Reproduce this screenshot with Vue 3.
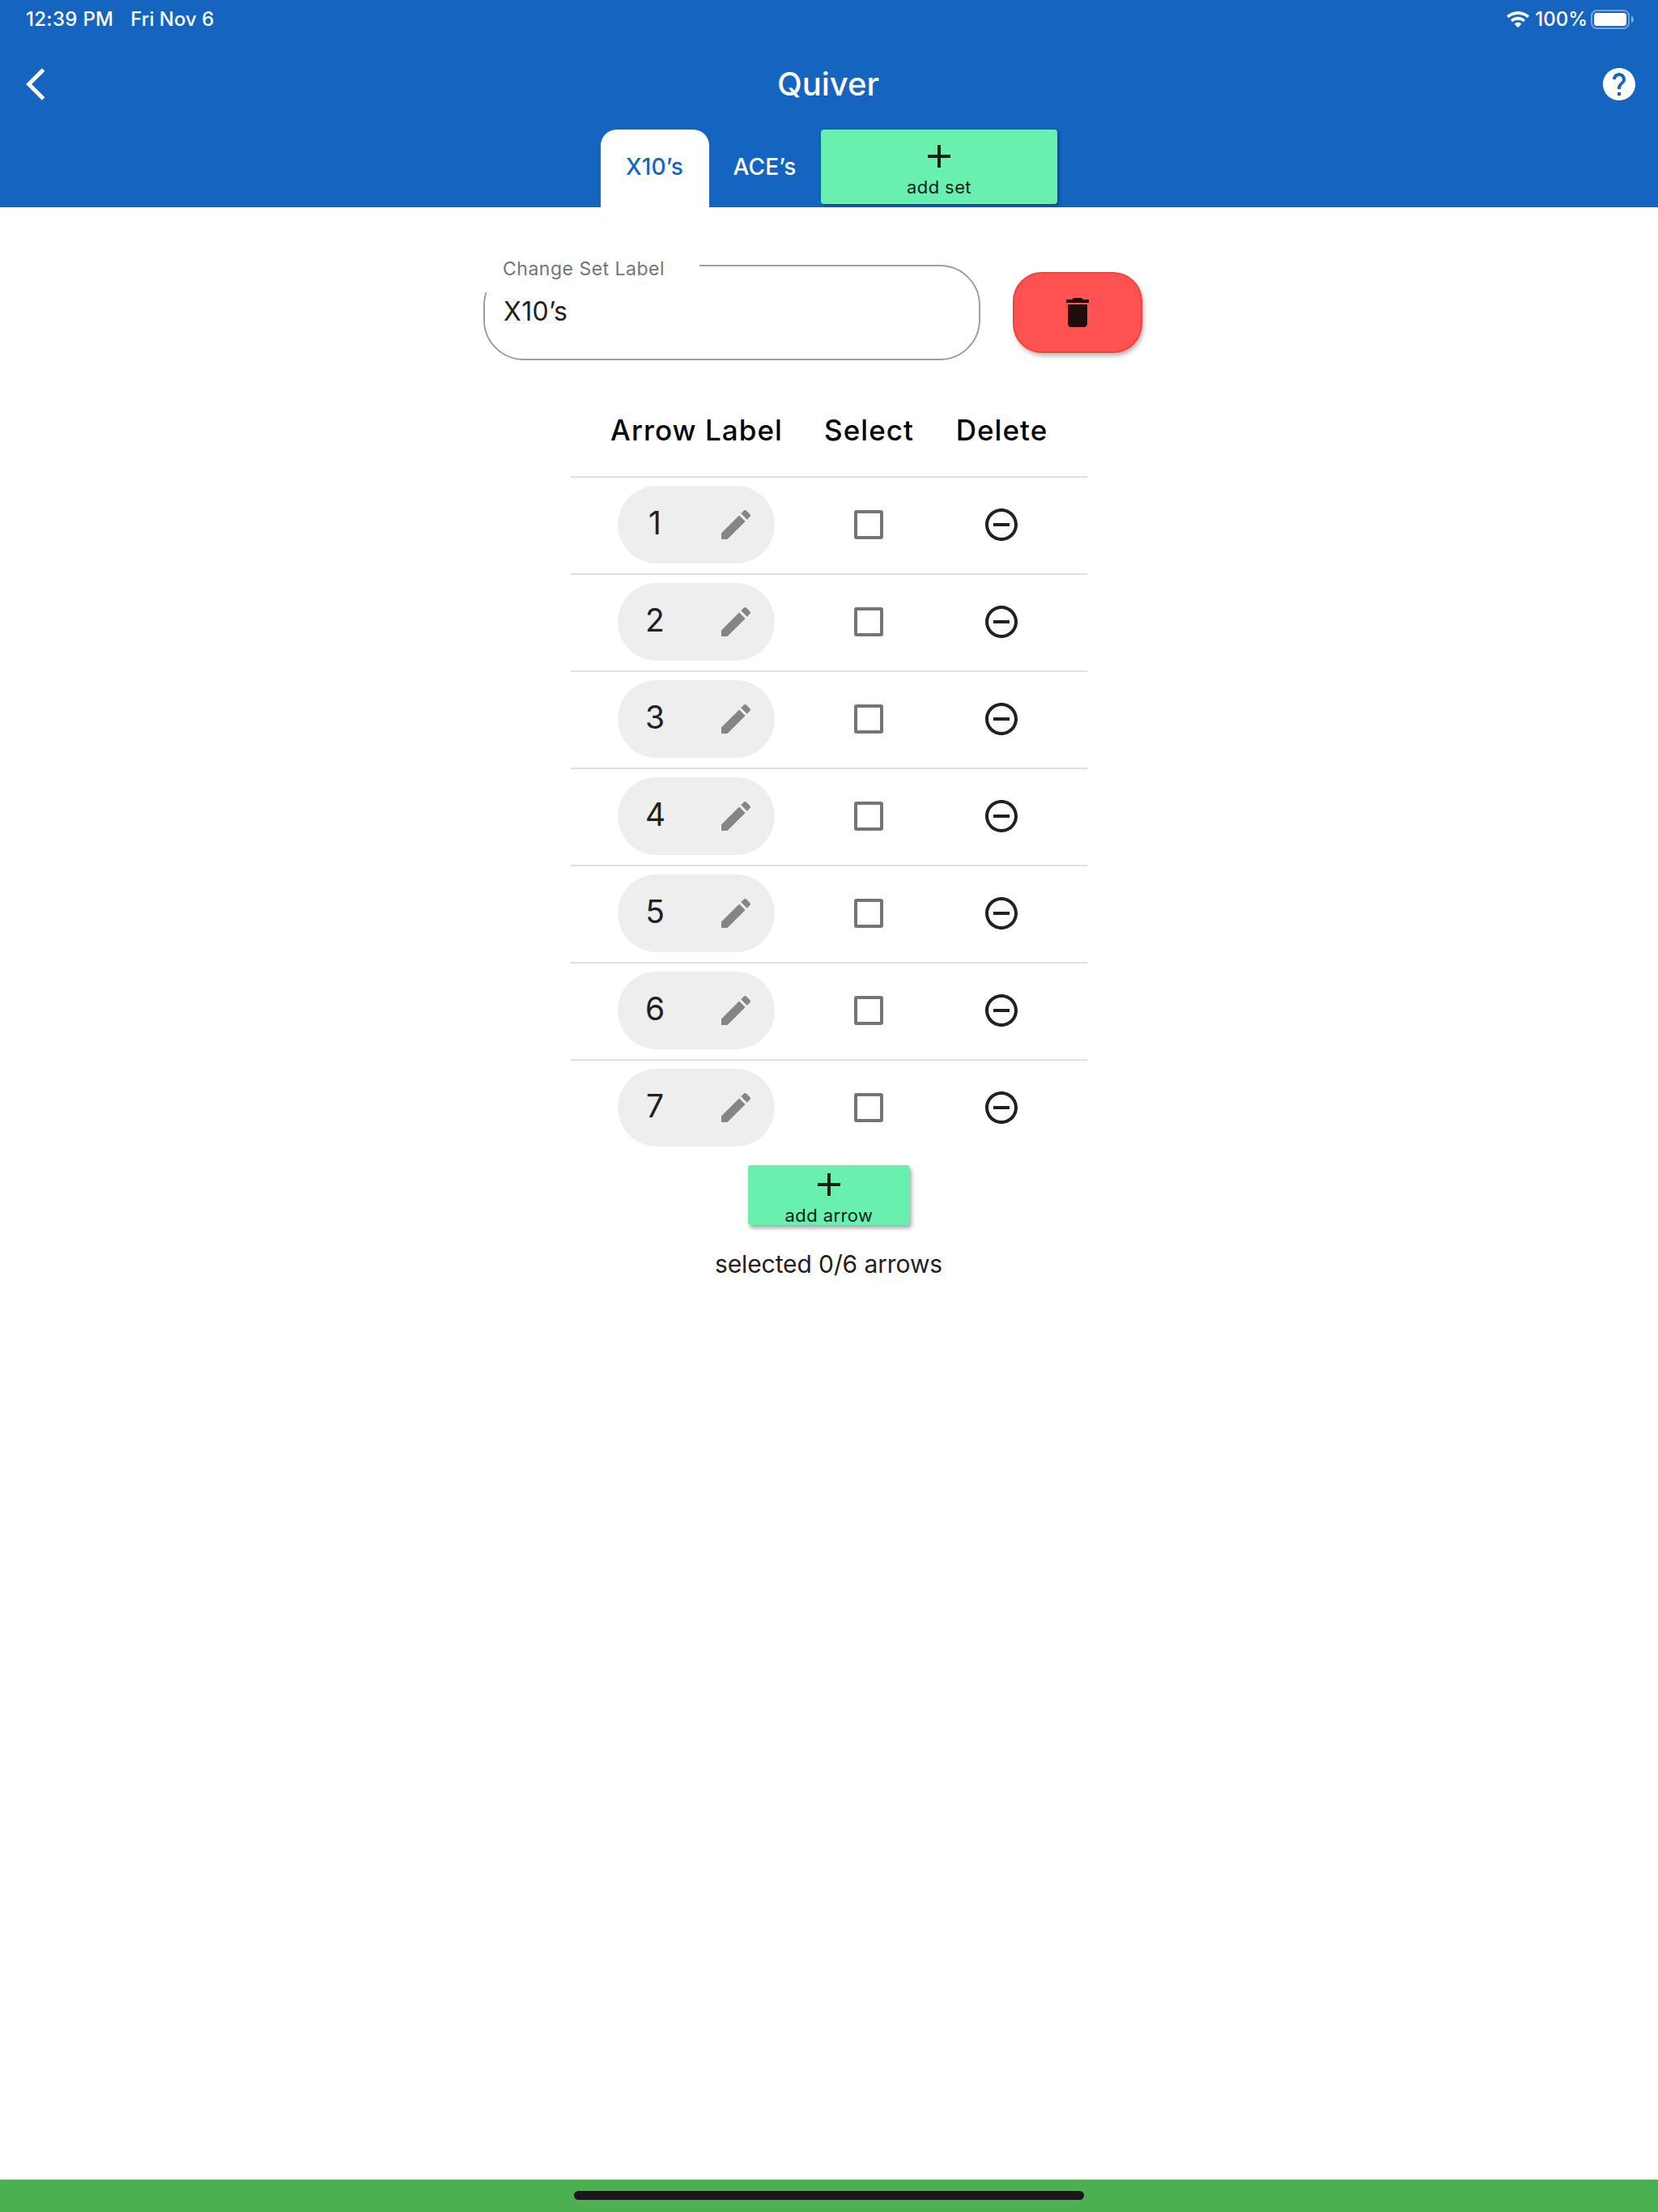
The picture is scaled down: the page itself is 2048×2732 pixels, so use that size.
<script setup>
import { ref } from 'vue'

const setLabel = ref('X10’s')
const arrows = ref(['1', '2', '3', '4', '5', '6', '7'])
</script>

<template>
  <div class="screen">
    <header class="app-bar">
      <div class="status">
        <span class="time">12:39 PM</span>
        <span class="date">Fri Nov 6</span>
        <svg class="wifi" width="28" height="21" viewBox="0 0 28 21">
          <path d="M14 0C8.700 0 3.700 2.100 0 5.600L2.500 8.200C5.500 5.300 9.600 4 14 4S22.500 5.300 25.500 8.200L28 5.600C24.300 2.100 19.300 0 14 0Z" />
          <path d="M14 6.800C10.500 6.800 7.300 8.200 4.900 10.600L7.400 13.200C9.200 11.500 11.500 10.800 14 10.800S18.800 11.500 20.600 13.200L23.100 10.600C20.700 8.200 17.500 6.800 14 6.800Z" />
          <path d="M14 13.600C12.300 13.600 10.900 14.300 9.700 15.600L14 20.200L18.300 15.600C17.100 14.300 15.700 13.600 14 13.600Z" />
        </svg>
        <span class="percent">100%</span>
        <svg class="battery" width="54" height="24" viewBox="0 0 54 24">
          <rect x="1" y="1" width="46" height="22" rx="6.500" fill="none" stroke="#fff" stroke-opacity=".42" stroke-width="2" />
          <rect x="4" y="4" width="40" height="16" rx="3.500" />
          <path d="M50 7.500C51.800 8.300 53 10 53 12S51.800 15.700 50 16.500Z" fill-opacity=".45" />
        </svg>
      </div>
      <div class="toolbar">
        <svg class="icon" viewBox="0 0 24 24"><path d="M11.670 3.870L9.900 2.100 0 12l9.900 9.900 1.770-1.770L3.540 12z" /></svg>
        <h1>Quiver</h1>
        <svg class="icon" viewBox="0 0 24 24"><path d="M12 2C6.480 2 2 6.480 2 12s4.480 10 10 10 10-4.480 10-10S17.520 2 12 2zm1 17h-2v-2h2v2zm2.070-7.750l-.9.920C13.450 12.900 13 13.500 13 15h-2v-.5c0-1.100.45-2.100 1.170-2.830l1.240-1.260c.37-.36.590-.86.590-1.410 0-1.100-.9-2-2-2s-2 .9-2 2H8c0-2.210 1.790-4 4-4s4 1.790 4 4c0 .88-.36 1.680-.93 2.250z" /></svg>
      </div>
      <nav class="tabs">
        <div class="tab active">X10’s</div>
        <div class="tab">ACE’s</div>
        <button class="add add-set">
          <svg class="icon" viewBox="0 0 24 24"><path d="M19 13h-6v6h-2v-6H5v-2h6V5h2v6h6v2z" /></svg>
          <span>add set</span>
        </button>
      </nav>
    </header>

    <main>
      <div class="set-row">
        <div class="field">
          <label>Change Set Label</label>
          <span>{{ setLabel }}</span>
        </div>
        <button class="remove-set">
          <svg class="icon" viewBox="0 0 24 24"><path d="M6 19c0 1.100.9 2 2 2h8c1.100 0 2-.9 2-2V7H6v12zM19 4h-3.500l-1-1h-5l-1 1H5v2h14V4z" /></svg>
        </button>
      </div>

      <div class="table">
        <div class="row head">
          <span>Arrow Label</span>
          <span>Select</span>
          <span>Delete</span>
        </div>
        <div v-for="arrow in arrows" :key="arrow" class="row">
          <div class="chip">
            <span>{{ arrow }}</span>
            <svg class="icon" viewBox="0 0 24 24"><path d="M3 17.250V21h3.750L17.810 9.940l-3.750-3.750L3 17.250zM20.710 7.040c.39-.39.390-1.020 0-1.410l-2.340-2.340c-.39-.39-1.020-.39-1.410 0l-1.830 1.830 3.750 3.750 1.830-1.830z" /></svg>
          </div>
          <span class="checkbox"></span>
          <svg class="icon" viewBox="0 0 24 24"><path d="M7 11v2h10v-2H7zm5-9C6.480 2 2 6.480 2 12s4.480 10 10 10 10-4.480 10-10S17.520 2 12 2zm0 18c-4.410 0-8-3.590-8-8s3.590-8 8-8 8 3.590 8 8-3.590 8-8 8z" /></svg>
        </div>
      </div>

      <button class="add add-arrow">
        <svg class="icon" viewBox="0 0 24 24"><path d="M19 13h-6v6h-2v-6H5v-2h6V5h2v6h6v2z" /></svg>
        <span>add arrow</span>
      </button>
      <p class="summary">selected 0/6 arrows</p>
    </main>

    <footer><div class="home-bar"></div></footer>
  </div>
</template>

<style>
body {
  margin: 0;
  background: #fff;
}
</style>

<style scoped>
.screen {
  display: flex;
  flex-direction: column;
  width: 2048px;
  height: 2732px;
  overflow: hidden;
  background: #fff;
  color: #212121;
  font-family: Inter, "Liberation Sans", sans-serif;
}

.icon {
  display: block;
  flex: none;
  width: 48px;
  height: 48px;
  fill: currentColor;
}

button {
  box-sizing: border-box;
  margin: 0;
  padding: 0;
  border: 0;
  font-family: inherit;
}

.app-bar {
  display: flex;
  flex-direction: column;
  flex: none;
  height: 256px;
  background: #1565c0;
  color: #fff;
}

.status {
  display: flex;
  align-items: center;
  height: 48px;
  padding: 0 29px 0 32px;
  font-size: 24px;
  font-weight: 500;
  line-height: 48px;
  white-space: nowrap;
}

.time {
  letter-spacing: .3px;
}

.date {
  margin-left: 21px;
}

.status svg {
  fill: #fff;
}

.wifi {
  margin-left: auto;
}

.percent {
  margin: 0 4px 0 7px;
}

.toolbar {
  display: flex;
  align-items: center;
  justify-content: space-between;
  height: 112px;
  padding: 0 24px 0 32px;
}

.toolbar h1 {
  margin: 0 0 0 -10px;
  font-size: 40px;
  font-weight: 500;
  line-height: 48px;
}

.tabs {
  display: flex;
  align-items: flex-start;
  justify-content: center;
  height: 96px;
}

.tab {
  box-sizing: border-box;
  width: 134px;
  height: 96px;
  padding-right: 1px;
  border-radius: 20px 20px 0 0;
  font-size: 28px;
  font-weight: 500;
  line-height: 93px;
  letter-spacing: .2px;
  text-align: center;
}

.tab + .tab {
  width: 138px;
}

.active {
  background: #fff;
  color: #1565c0;
}

.add {
  display: flex;
  flex-direction: column;
  align-items: center;
  border-radius: 4px;
  background: #69f0ae;
  color: #0f2419;
  font-size: 22px;
  line-height: 28px;
  letter-spacing: .4px;
}

.add-set {
  width: 292px;
  height: 92px;
  padding-top: 9px;
  box-shadow: 2px 2px 4px rgba(0, 0, 0, .35);
}

main {
  display: flex;
  flex: 1;
  flex-direction: column;
  align-items: center;
}

.set-row {
  display: flex;
  align-items: center;
  gap: 40px;
  margin: 71px 0 0 -40px;
}

.field {
  position: relative;
  box-sizing: border-box;
  width: 614px;
  height: 118px;
  padding: 36px 0 0 23px;
  border: 2px solid #9e9e9e;
  border-radius: 50px;
  font-size: 32px;
  line-height: 39px;
  letter-spacing: .3px;
}

.field label {
  position: absolute;
  top: -14px;
  left: -2px;
  box-sizing: border-box;
  width: 267px;
  height: 46px;
  padding-left: 24px;
  background: #fff;
  color: #757575;
  font-size: 23px;
  line-height: 34px;
  letter-spacing: .5px;
}

.remove-set {
  display: flex;
  align-items: center;
  justify-content: center;
  width: 160px;
  height: 100px;
  border: 2px solid #f44336;
  border-radius: 36px;
  background: #ff5252;
  color: #220b0b;
  box-shadow: 2px 4px 5px rgba(0, 0, 0, .26);
}

.table {
  width: 638px;
  margin-top: 31px;
}

.row {
  display: grid;
  grid-template-columns: 214px 116px 116px;
  column-gap: 48px;
  box-sizing: border-box;
  height: 120px;
  padding: 0 48px 2px;
  border-top: 2px solid #e0e0e0;
  align-items: center;
  justify-items: center;
}

.head {
  height: 112px;
  padding-bottom: 3px;
  border-top: 0;
  color: #000;
  font-size: 35px;
  font-weight: 500;
  letter-spacing: 1.05px;
  white-space: nowrap;
}

.head span {
  margin-right: -1px;
}

.chip {
  display: flex;
  align-items: center;
  justify-content: space-between;
  box-sizing: border-box;
  width: 194px;
  height: 96px;
  padding: 0 24px 0 34px;
  border-radius: 48px;
  background: #eee;
}

.chip span {
  width: 24px;
  margin-top: -4px;
  font-size: 39px;
  line-height: 48px;
  text-align: center;
}

.chip .icon {
  color: #858585;
}

.checkbox {
  box-sizing: border-box;
  width: 36px;
  height: 36px;
  border: 4px solid #757575;
  border-radius: 3px;
}

.add-arrow {
  width: 200px;
  height: 74px;
  margin-top: 11px;
  box-shadow: 2px 4px 5px rgba(0, 0, 0, .34);
}

.summary {
  margin: 30px 0 0 -1px;
  font-size: 30px;
  line-height: 36px;
  letter-spacing: -.1px;
}

footer {
  display: flex;
  flex: none;
  justify-content: center;
  box-sizing: border-box;
  height: 40px;
  padding-top: 14px;
  background: #4caf50;
  box-shadow: 0 -1px 4px rgba(0, 0, 0, .08);
}

.home-bar {
  width: 630px;
  height: 11px;
  border-radius: 6px;
  background: #191919;
}
</style>
